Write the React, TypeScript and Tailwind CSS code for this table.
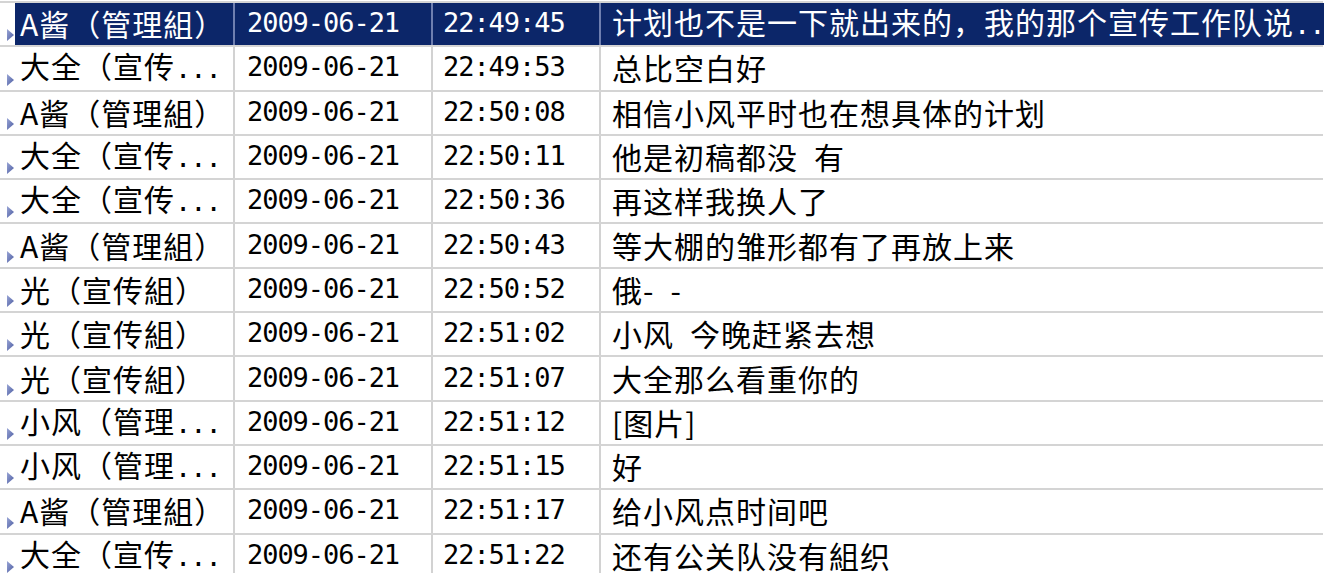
import React from "react";

type Row = { name: string; dots?: boolean; date: string; time: string; msg: string; mdots?: boolean; sel?: boolean };

const rows: Row[] = [
  { name: "A酱（管理組）", date: "2009-06-21", time: "22:49:45", msg: "计划也不是一下就出来的，我的那个宣传工作队说", mdots: true, sel: true },
  { name: "大全（宣传", dots: true, date: "2009-06-21", time: "22:49:53", msg: "总比空白好" },
  { name: "A酱（管理組）", date: "2009-06-21", time: "22:50:08", msg: "相信小风平时也在想具体的计划" },
  { name: "大全（宣传", dots: true, date: "2009-06-21", time: "22:50:11", msg: "他是初稿都没\u2002有" },
  { name: "大全（宣传", dots: true, date: "2009-06-21", time: "22:50:36", msg: "再这样我换人了" },
  { name: "A酱（管理組）", date: "2009-06-21", time: "22:50:43", msg: "等大棚的雏形都有了再放上来" },
  { name: "光（宣传組）", date: "2009-06-21", time: "22:50:52", msg: "俄-\u2002-" },
  { name: "光（宣传組）", date: "2009-06-21", time: "22:51:02", msg: "小风\u2002今晚赶紧去想" },
  { name: "光（宣传組）", date: "2009-06-21", time: "22:51:07", msg: "大全那么看重你的" },
  { name: "小风（管理", dots: true, date: "2009-06-21", time: "22:51:12", msg: "[图片]" },
  { name: "小风（管理", dots: true, date: "2009-06-21", time: "22:51:15", msg: "好" },
  { name: "A酱（管理組）", date: "2009-06-21", time: "22:51:17", msg: "给小风点时间吧" },
  { name: "大全（宣传", dots: true, date: "2009-06-21", time: "22:51:22", msg: "还有公关队没有組织" },
];

const cjk = "font-['Noto_Sans_CJK_SC','Noto_Sans',sans-serif] font-normal text-[30px] tracking-[1px] leading-[36px]";
const mono = "font-['DejaVu_Sans_Mono',monospace] text-[27px] tracking-[-1.05px] leading-[36px]";

function Arrow() {
  return (
    <svg width="7" height="12" viewBox="0 0 7 12">
      <defs>
        <linearGradient id="ag" x1="0" y1="0" x2="1" y2="1">
          <stop offset="0" stopColor="#9aa6d6" />
          <stop offset="1" stopColor="#4a5aa0" />
        </linearGradient>
      </defs>
      <polygon points="0,0 7,6 0,12" fill="url(#ag)" />
    </svg>
  );
}

export default function App() {
  return (
    <div className="w-[1337px] h-[573px] overflow-hidden bg-white pt-px">
      {rows.map((r, i) => {
        const sep = r.sel ? "border-l-2 border-[#6f7fb0]" : "border-l-2 border-[#d2d2d2]";
        const txt = r.sel ? "text-white" : "text-black";
        return (
          <div key={i} className="flex w-[1323px] h-[44.3px] border-t-2 border-[#d4d4d4]">
            <div className="w-[15px] shrink-0 flex flex-col justify-end pb-[4px] pl-[7px]">
              <Arrow />
            </div>
            <div className={`flex flex-1 h-full ${r.sel ? "bg-[#0c2669]" : ""} ${txt}`}>
              <div className={`w-[218px] shrink-0 flex items-center pl-[5px] pb-[2px] whitespace-nowrap ${cjk}`}>
                <span>
                  {r.name}
                  {r.dots && <span className={mono}>...</span>}
                </span>
              </div>
              <div className={`w-[198px] shrink-0 flex items-center pl-[12px] pb-[2px] ${sep} ${mono}`}>{r.date}</div>
              <div className={`w-[168px] shrink-0 flex items-center pl-[10px] pb-[2px] ${sep} ${mono}`}>{r.time}</div>
              <div className={`flex-1 min-w-0 flex items-center pl-[11px] pb-[2px] whitespace-nowrap ${sep} ${cjk}`}>
                <span>
                  {r.msg}
                  {r.mdots && <span className={mono}>..</span>}
                </span>
              </div>
            </div>
          </div>
        );
      })}
    </div>
  );
}
